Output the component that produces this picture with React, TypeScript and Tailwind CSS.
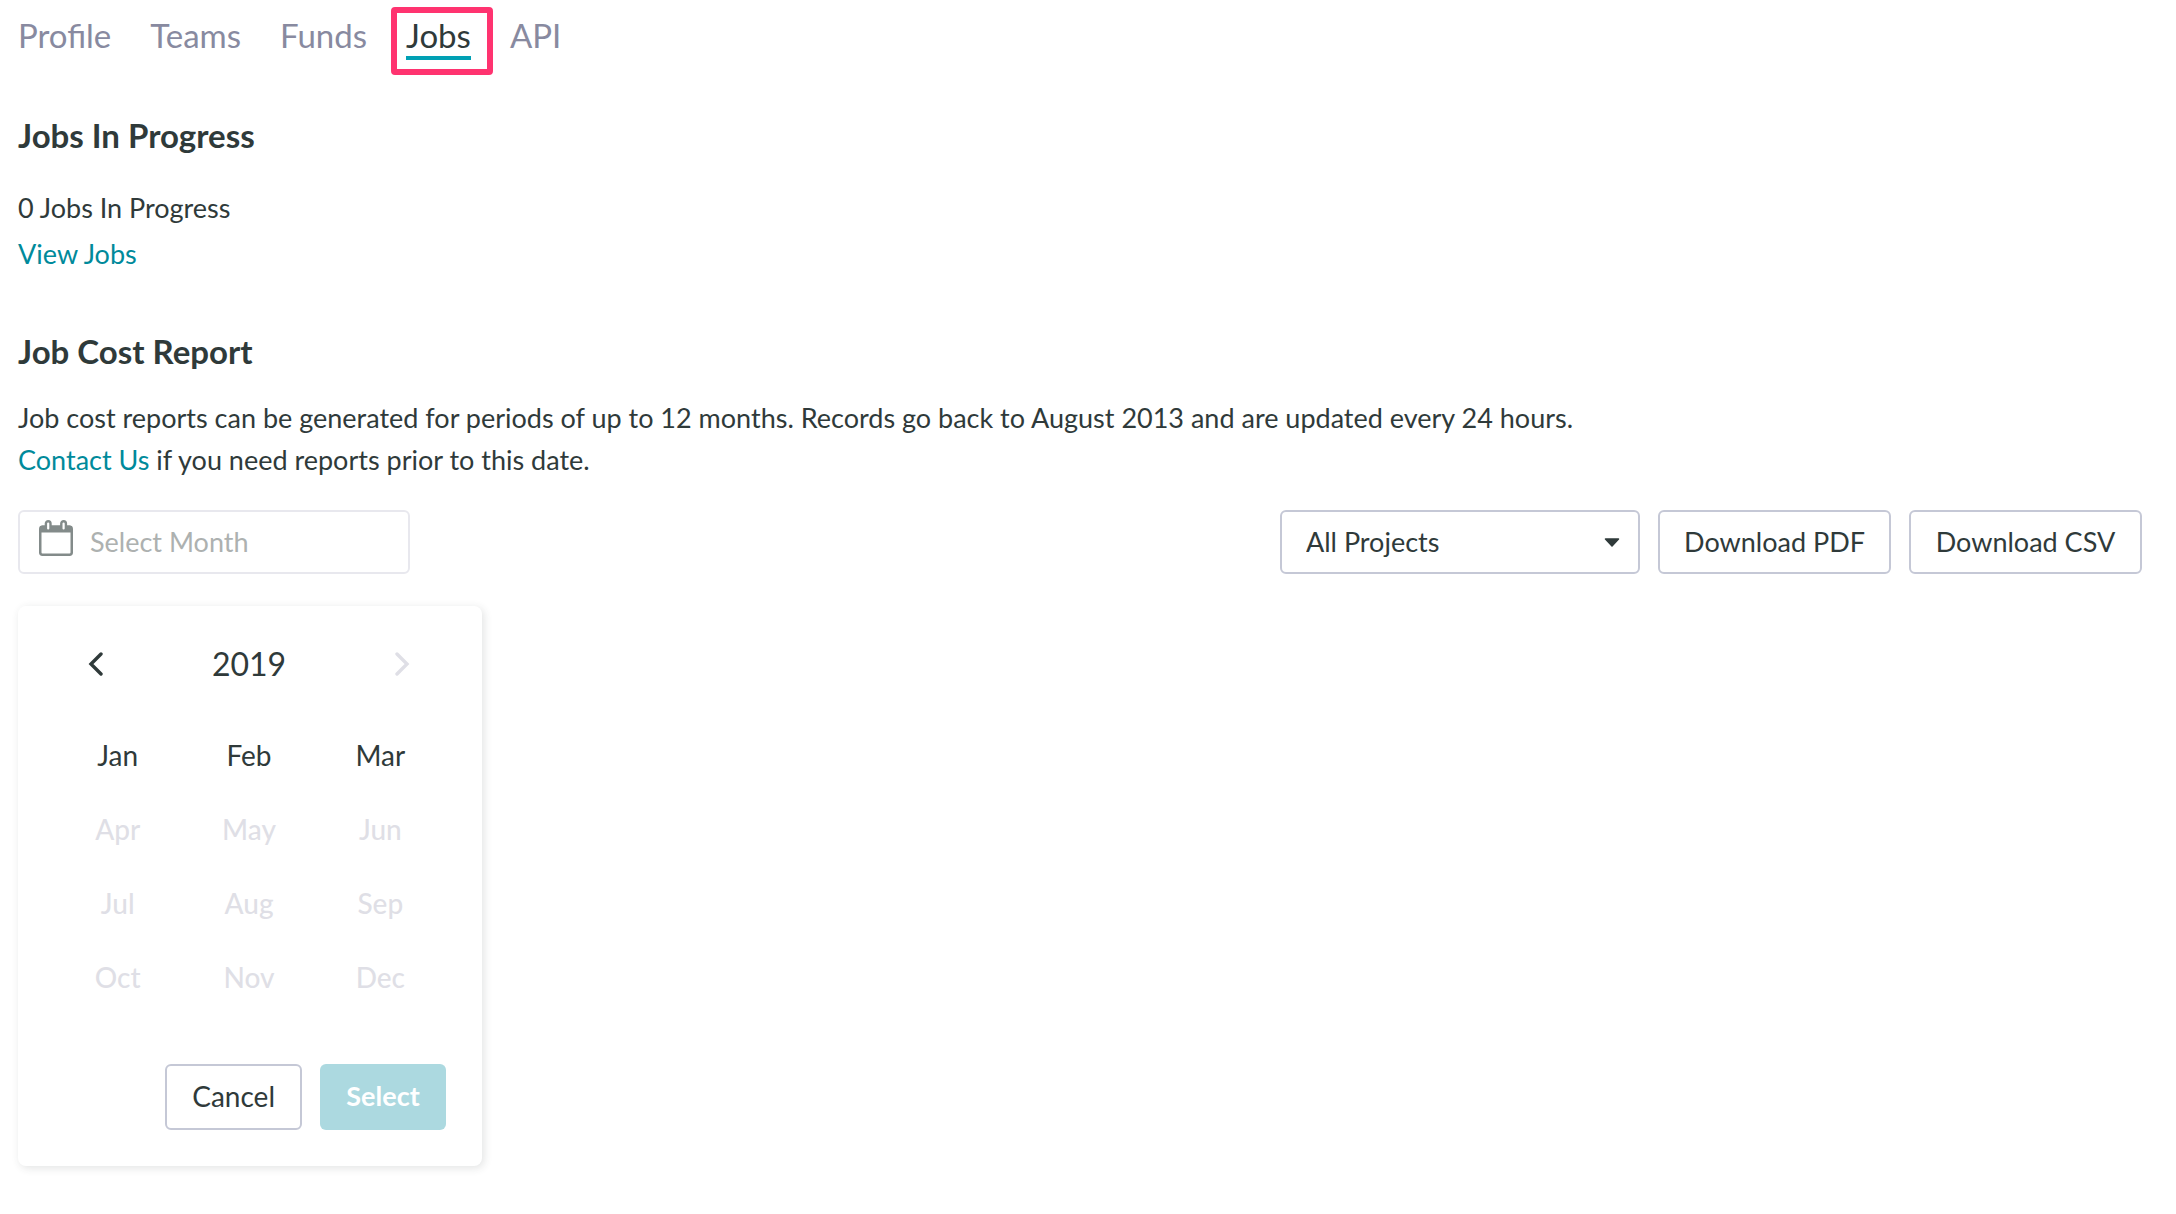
import { useState } from 'react';

const tabs = ['Profile', 'Teams', 'Funds', 'Jobs', 'API'];

const months = ['Jan', 'Feb', 'Mar', 'Apr', 'May', 'Jun', 'Jul', 'Aug', 'Sep', 'Oct', 'Nov', 'Dec'];

// Last month of the year that has records
const lastMonth = 2;

const outlineButton =
  'h-16 min-w-[233px] rounded-md border-2 border-[#c5c8d6] bg-white px-[23px] text-[27px] leading-[42px] text-[#2f3a3a] whitespace-nowrap';

function CalendarIcon() {
  return (
    <svg width="34" height="36" viewBox="0 0 34 36" className="shrink-0" aria-hidden="true">
      <rect x="1.25" y="6.75" width="31.5" height="28" rx="2.2" fill="#fff" stroke="#838b8a" strokeWidth="2.5" />
      <path d="M1 12.5V8a2.5 2.5 0 0 1 2.5-2.5h27A2.5 2.5 0 0 1 33 8v4.5z" fill="#838b8a" />
      <rect x="6.9" y="1.2" width="4.6" height="9.6" rx="2.3" fill="#fff" stroke="#838b8a" strokeWidth="2.4" />
      <rect x="22.3" y="1.2" width="4.6" height="9.6" rx="2.3" fill="#fff" stroke="#838b8a" strokeWidth="2.4" />
    </svg>
  );
}

function Chevron({ direction }: { direction: 'left' | 'right' }) {
  return (
    <svg width="16" height="24" viewBox="0 0 16 24" fill="none" stroke="currentColor" strokeWidth="3.4" aria-hidden="true">
      <path
        d={direction === 'left' ? 'M13 2 3 12l10 10' : 'M3 2l10 10L3 22'}
        strokeLinecap="round"
      />
    </svg>
  );
}

function Tabs() {
  return (
    <nav className="flex gap-[39px] pt-[15px] text-[33px] leading-10">
      {tabs.map((tab) =>
        tab === 'Jobs' ? (
          <a key={tab} href="#jobs" aria-current="page" className="relative border-b-4 border-[#00a0b4] pb-px text-[#2f3a3a]">
            {tab}
            <span className="absolute -top-2 -right-[22px] -bottom-[19px] -left-[15px] rounded-sm border-[6px] border-[#ff3370]" />
          </a>
        ) : (
          <a key={tab} href={`#${tab.toLowerCase()}`} className="text-[#888aa0]">
            {tab}
          </a>
        )
      )}
    </nav>
  );
}

function MonthPicker() {
  const [selected, setSelected] = useState<number | null>(null);

  return (
    <div className="mt-8 w-[464px] rounded-lg bg-white pt-[34px] pb-9 shadow-[2px_2px_8px_rgba(47,58,58,0.14)]">
      <div className="flex h-12 items-center justify-between pr-[72px] pl-[70px]">
        <button type="button" aria-label="Previous year" className="text-[#2f3a3a]">
          <Chevron direction="left" />
        </button>
        <span className="text-[32px] leading-[48px]">2019</span>
        <button type="button" aria-label="Next year" disabled className="text-[#dfdfe6]">
          <Chevron direction="right" />
        </button>
      </div>

      <div className="mt-[30px] grid grid-cols-3 pr-9 pl-[34px]">
        {months.map((month, index) => (
          <button
            key={month}
            type="button"
            disabled={index > lastMonth}
            onClick={() => setSelected(index)}
            className="h-[74px] text-[28px] leading-[42px] disabled:font-medium disabled:text-[#dfdfe6]"
          >
            {month}
          </button>
        ))}
      </div>

      <div className="mt-[50px] flex justify-end gap-[18px] px-9">
        <button
          type="button"
          onClick={() => setSelected(null)}
          className="h-[66px] rounded-md border-2 border-[#c5c8d6] bg-white px-[25px] pb-0.5 text-[28px] leading-[42px]"
        >
          Cancel
        </button>
        <button
          type="button"
          disabled={selected === null}
          className="h-[66px] min-w-[126px] rounded-md bg-[#00a0b4] px-6 pb-0.5 text-[27px] leading-[42px] font-bold text-white disabled:bg-[#acd9e0]"
        >
          Select
        </button>
      </div>
    </div>
  );
}

export default function App() {
  return (
    <main className="min-h-screen bg-white pr-[34px] pl-[18px] font-['Lato',sans-serif] text-[27px] leading-[42px] text-[#2f3a3a]">
      <Tabs />

      <section className="pt-[55px]">
        <h2 className="text-[33px] leading-10 font-bold">Jobs In Progress</h2>
        <div className="mt-[30px] leading-[46px]">
          <p>0 Jobs In Progress</p>
          <p>
            <a href="#view-jobs" className="text-[#008a9b]">View Jobs</a>
          </p>
        </div>
      </section>

      <section className="pt-[54px]">
        <h2 className="text-[33px] leading-10 font-bold">Job Cost Report</h2>
        <p className="mt-[26px]">
          Job cost reports can be generated for periods of up to 12 months. Records go back to August 2013 and are updated every 24 hours.
          <br />
          <a href="#contact" className="text-[#008a9b]">Contact Us</a> if you need reports prior to this date.
        </p>

        <div className="mt-[29px] flex items-center justify-between">
          <label className="flex h-16 w-[392px] items-center gap-[17px] rounded-md border-2 border-[#e8e8ee] px-[19px]">
            <span className="mb-2">
              <CalendarIcon />
            </span>
            <input
              type="text"
              aria-label="Month"
              placeholder="Select Month"
              className="w-full min-w-0 bg-transparent outline-none placeholder:text-[#adb1b0]"
            />
          </label>

          <div className="flex gap-[18px]">
            <div className="relative">
              <select
                aria-label="Project"
                className="h-16 w-[360px] appearance-none rounded-md border-2 border-[#c5c8d6] bg-white pr-14 pl-6"
              >
                <option>All Projects</option>
              </select>
              <svg width="16" height="9" viewBox="0 0 16 9" className="pointer-events-none absolute top-7 right-5" aria-hidden="true">
                <path d="M1.5 1h13L8 8z" fill="#2f3a3a" stroke="#2f3a3a" strokeWidth="1.5" strokeLinejoin="round" />
              </svg>
            </div>
            <button type="button" className={outlineButton}>Download PDF</button>
            <button type="button" className={outlineButton}>Download CSV</button>
          </div>
        </div>

        <MonthPicker />
      </section>
    </main>
  );
}
